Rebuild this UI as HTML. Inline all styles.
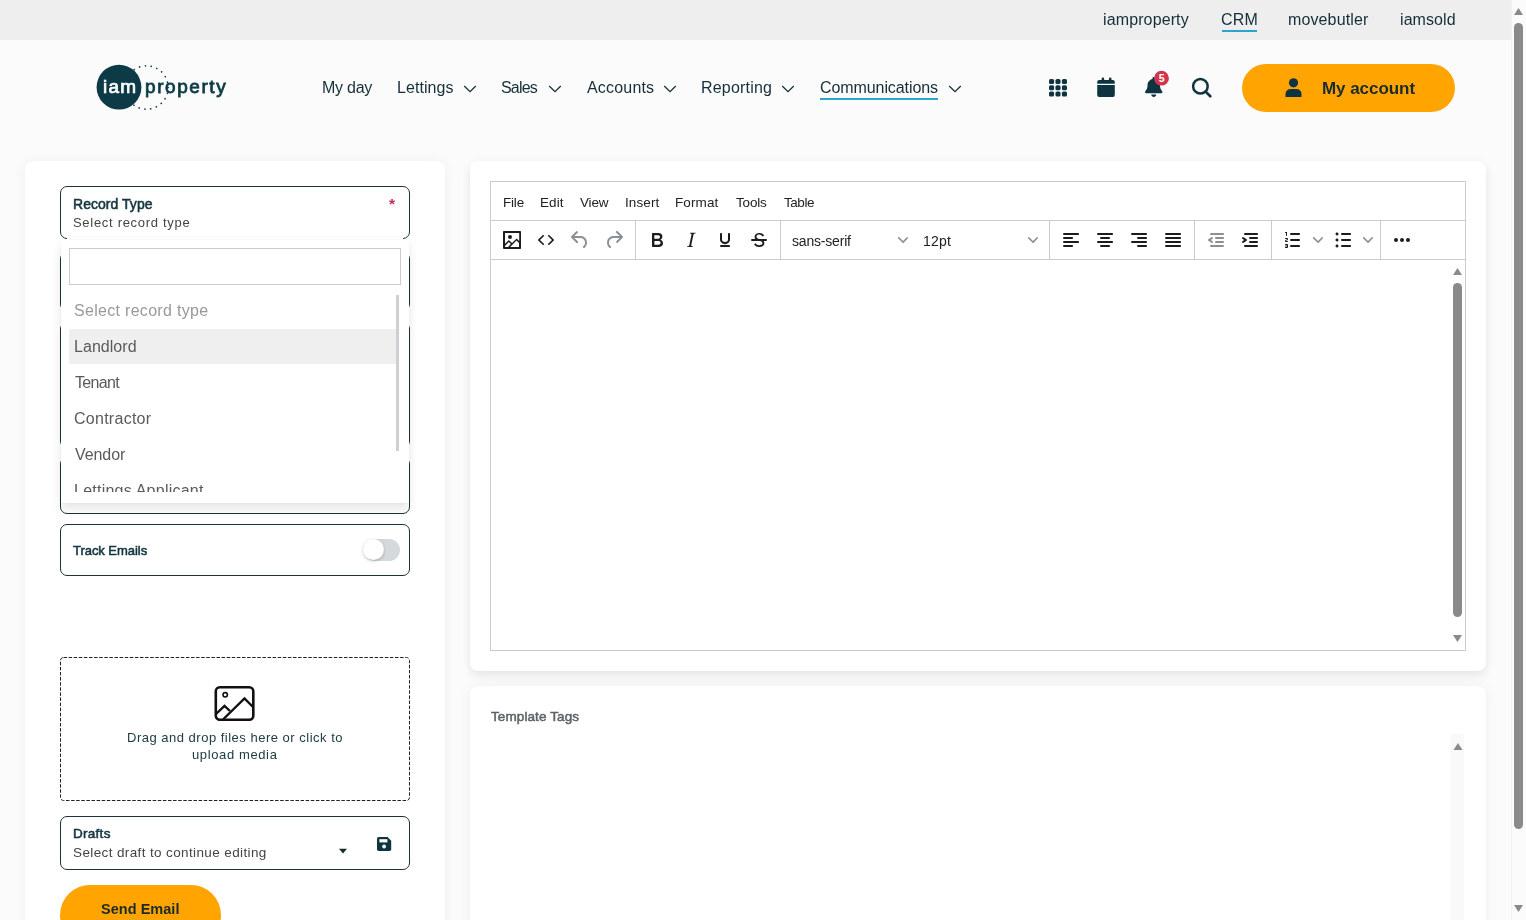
<!DOCTYPE html>
<html><head><meta charset="utf-8">
<style>
html,body{margin:0;padding:0;}
body{width:1526px;height:920px;overflow:hidden;position:relative;background:#fbfbfb;font-family:"Liberation Sans",sans-serif;}
.t{position:absolute;white-space:nowrap;line-height:1;will-change:transform;}
</style></head><body>
<div style="position:absolute;left:0px;top:0px;width:1511px;height:40px;background:#eeeeee"></div>
<div class="t" style="left:1103.40px;top:12px;font-size:16px;color:#142f38;font-weight:400;letter-spacing:0.120px;">iamproperty</div>
<div class="t" style="left:1221.10px;top:12px;font-size:16px;color:#142f38;font-weight:400;letter-spacing:0.150px;">CRM</div>
<div style="position:absolute;left:1222px;top:30px;width:35px;height:2px;background:#2aa5cf"></div>
<div class="t" style="left:1288.30px;top:12px;font-size:16px;color:#142f38;font-weight:400;letter-spacing:0.122px;">movebutler</div>
<div class="t" style="left:1399.80px;top:12px;font-size:16px;color:#142f38;font-weight:400;letter-spacing:0.083px;">iamsold</div>
<svg style="position:absolute;left:90px;top:55px" width="150" height="65" viewBox="90 55 150 65">
<circle cx="119" cy="87.2" r="22.4" fill="#0d3a47"/>
<circle cx="146.5" cy="87.5" r="21.7" fill="none" stroke="#0d3a47" stroke-width="1.7" stroke-dasharray="0.01 5.9" stroke-linecap="round"/>
</svg>
<div class="t" style="left:102.80px;top:77px;font-size:19px;color:#ffffff;font-weight:400;letter-spacing:1.200px;-webkit-text-stroke:0.7px #ffffff;">iam</div>
<div class="t" style="left:145.00px;top:77px;font-size:19px;color:#0d3a47;font-weight:400;letter-spacing:1.571px;-webkit-text-stroke:0.8px #0d3a47;">property</div>
<div class="t" style="left:322.20px;top:80px;font-size:16px;color:#142f38;font-weight:400;letter-spacing:-0.260px;">My day</div>
<div class="t" style="left:396.60px;top:80px;font-size:16px;color:#142f38;font-weight:400;letter-spacing:0.057px;">Lettings</div>
<svg style="position:absolute;left:462.5px;top:84px" width="15" height="10" viewBox="0 0 15 10"><path d="M1.2 2 L7 7.7 L12.8 2" fill="none" stroke="#142f38" stroke-width="1.25"/></svg>
<div class="t" style="left:500.50px;top:80px;font-size:16px;color:#142f38;font-weight:400;letter-spacing:-0.800px;">Sales</div>
<svg style="position:absolute;left:547.5px;top:84px" width="15" height="10" viewBox="0 0 15 10"><path d="M1.2 2 L7 7.7 L12.8 2" fill="none" stroke="#142f38" stroke-width="1.25"/></svg>
<div class="t" style="left:586.50px;top:80px;font-size:16px;color:#142f38;font-weight:400;letter-spacing:0.186px;">Accounts</div>
<svg style="position:absolute;left:663px;top:84px" width="15" height="10" viewBox="0 0 15 10"><path d="M1.2 2 L7 7.7 L12.8 2" fill="none" stroke="#142f38" stroke-width="1.25"/></svg>
<div class="t" style="left:701.30px;top:80px;font-size:16px;color:#142f38;font-weight:400;letter-spacing:0.188px;">Reporting</div>
<svg style="position:absolute;left:781.3px;top:84px" width="15" height="10" viewBox="0 0 15 10"><path d="M1.2 2 L7 7.7 L12.8 2" fill="none" stroke="#142f38" stroke-width="1.25"/></svg>
<div class="t" style="left:819.50px;top:80px;font-size:16px;color:#142f38;font-weight:400;letter-spacing:-0.085px;">Communications</div>
<svg style="position:absolute;left:947.8px;top:84px" width="15" height="10" viewBox="0 0 15 10"><path d="M1.2 2 L7 7.7 L12.8 2" fill="none" stroke="#142f38" stroke-width="1.25"/></svg>
<div style="position:absolute;left:820px;top:98px;width:118px;height:2px;background:#2aa5cf"></div>
<svg style="position:absolute;left:1049.1px;top:78.8px" width="19" height="19" viewBox="0 0 19 19" fill="#0e3441"><rect x="0.00" y="0.00" width="5.1" height="5.1" rx="1.6"/><rect x="6.45" y="0.00" width="5.1" height="5.1" rx="1.6"/><rect x="12.90" y="0.00" width="5.1" height="5.1" rx="1.6"/><rect x="0.00" y="6.20" width="5.1" height="5.1" rx="1.6"/><rect x="6.45" y="6.20" width="5.1" height="5.1" rx="1.6"/><rect x="12.90" y="6.20" width="5.1" height="5.1" rx="1.6"/><rect x="0.00" y="12.40" width="5.1" height="5.1" rx="1.6"/><rect x="6.45" y="12.40" width="5.1" height="5.1" rx="1.6"/><rect x="12.90" y="12.40" width="5.1" height="5.1" rx="1.6"/></svg>
<svg style="position:absolute;left:1097px;top:77px" width="19" height="21" viewBox="0 0 19 21" fill="#0e3441">
<rect x="4.6" y="0.6" width="2.6" height="3.6" rx="1.3"/><rect x="11.9" y="0.6" width="2.6" height="3.6" rx="1.3"/>
<path d="M0.2 4.9 Q0.2 2.9 2.2 2.9 H15.8 Q17.8 2.9 17.8 4.9 V6.8 H0.2 Z"/>
<path d="M0.2 8.1 H17.8 V18 Q17.8 20 15.8 20 H2.2 Q0.2 20 0.2 18 Z"/>
</svg>
<svg style="position:absolute;left:1145.3px;top:77.2px" width="17.5" height="20" viewBox="0 0 448 512">
<path fill="#0e3441" d="M224 0c-17.7 0-32 14.3-32 32V51.2C119 66 64 130.6 64 208v18.8c0 47-17.3 92.4-48.5 127.6l-7.4 8.300c-8.4 9.4-10.4 22.9-5.3 34.4S19.4 416 32 416H416c12.6 0 24-7.4 29.2-18.9s3.1-25-5.3-34.4l-7.4-8.3C401.3 319.2 384 273.9 384 226.8V208c0-77.4-55-142-128-156.8V32c0-17.7-14.3-32-32-32zm45.3 493.3c12-12 18.7-28.3 18.7-45.3H224 160c0 17 6.7 33.3 18.7 45.3s28.3 18.7 45.3 18.7s33.3-6.7 45.3-18.7z"/>
</svg>
<svg style="position:absolute;left:1150px;top:66px" width="24" height="24" viewBox="0 0 24 24">
<circle cx="11.5" cy="12.2" r="7.4" fill="#d1344b"/>
<text x="11.6" y="16.1" font-family="Liberation Sans" font-weight="700" font-size="10.5" fill="#fff" text-anchor="middle">5</text>
</svg>
<svg style="position:absolute;left:1191px;top:77px" width="23" height="22" viewBox="0 0 23 22">
<circle cx="9.4" cy="9.2" r="7.3" fill="none" stroke="#0e3441" stroke-width="2.5"/>
<path d="M14.6 14.6 L19.3 19.3" stroke="#0e3441" stroke-width="2.7" stroke-linecap="round"/>
</svg>
<div style="position:absolute;left:1242px;top:64px;width:213px;height:48px;background:#ffa400;border-radius:24px"></div>
<svg style="position:absolute;left:1285px;top:78px" width="18" height="20" viewBox="0 0 18 20" fill="#0d3440">
<circle cx="8.5" cy="4.8" r="4.6"/>
<path d="M0.5 19 V16.5 Q0.5 11 6 11 H11 Q16.5 11 16.5 16.5 V19 Z"/>
</svg>
<div class="t" style="left:1322.00px;top:80px;font-size:17px;color:#1a2b2f;font-weight:700;letter-spacing:-0.044px;">My account</div>
<div style="position:absolute;left:25px;top:161px;width:420px;height:800px;background:#fff;border-radius:8px;box-shadow:0 0 14px rgba(0,0,0,0.05)"></div>
<div style="position:absolute;left:60px;top:252px;width:350px;height:59px;box-sizing:border-box;border:1px solid #1e3238;border-radius:7px"></div>
<div style="position:absolute;left:60px;top:322px;width:350px;height:126px;box-sizing:border-box;border:1px solid #1e3238;border-radius:7px"></div>
<div style="position:absolute;left:60px;top:457px;width:350px;height:57px;box-sizing:border-box;border:1px solid #1e3238;border-radius:7px"></div>
<div style="position:absolute;left:60px;top:186px;width:350px;height:53px;box-sizing:border-box;border:1px solid #1e3238;border-radius:7px;background:#fff"></div>
<div class="t" style="left:72.60px;top:197px;font-size:14px;color:#143540;font-weight:400;letter-spacing:0.040px;-webkit-text-stroke:0.55px #143540;">Record Type</div>
<div class="t" style="left:72.60px;top:216px;font-size:13px;color:#444;font-weight:400;letter-spacing:0.700px;">Select record type</div>
<div class="t" style="left:389.00px;top:196px;font-size:15.5px;color:#c0304a;font-weight:700;">*</div>
<div style="position:absolute;left:67px;top:237px;width:336px;height:3px;background:#fff;box-shadow:0 -1px 1px rgba(0,0,0,0.02)"></div>
<div style="position:absolute;left:61px;top:240px;width:348px;height:263px;background:#fff;box-shadow:0 6px 10px rgba(0,0,0,0.10), 0 0 3px rgba(0,0,0,0.04)"></div>
<div style="position:absolute;left:69px;top:248px;width:332px;height:37px;box-sizing:border-box;border:1px solid #cccccc;background:#fff"></div>
<div style="position:absolute;left:69px;top:329px;width:330px;height:35px;background:#efefef;border-radius:2px"></div>
<div class="t" style="left:74.00px;top:303px;font-size:16px;color:#999;font-weight:400;letter-spacing:0.300px;">Select record type</div>
<div class="t" style="left:74.00px;top:339px;font-size:16px;color:#5a5a5a;font-weight:400;letter-spacing:0.043px;">Landlord</div>
<div class="t" style="left:75.00px;top:375px;font-size:16px;color:#5a5a5a;font-weight:400;letter-spacing:-0.680px;">Tenant</div>
<div class="t" style="left:74.00px;top:411px;font-size:16px;color:#5a5a5a;font-weight:400;letter-spacing:0.267px;">Contractor</div>
<div class="t" style="left:75.00px;top:447px;font-size:16px;color:#5a5a5a;font-weight:400;letter-spacing:-0.080px;">Vendor</div>
<div class="t" style="left:74.00px;top:483px;font-size:16px;color:#5a5a5a;font-weight:400;letter-spacing:0.235px;">Lettings Applicant</div>
<div style="position:absolute;left:61px;top:492px;width:335px;height:11px;background:#fff"></div>
<div style="position:absolute;left:396px;top:295px;width:3px;height:156px;background:#cfcfd3"></div>
<div style="position:absolute;left:60px;top:524px;width:350px;height:52px;box-sizing:border-box;border:1px solid #1e3238;border-radius:7px;background:#fff"></div>
<div class="t" style="left:73.40px;top:544px;font-size:13px;color:#143540;font-weight:400;letter-spacing:-0.045px;-webkit-text-stroke:0.55px #143540;">Track Emails</div>
<div style="position:absolute;left:364px;top:539px;width:36px;height:22px;background:#d5d9dc;border-radius:11px"></div>
<div style="position:absolute;left:363px;top:539px;width:21px;height:21px;box-sizing:border-box;background:#fff;border-radius:50%;box-shadow:0 1px 3px rgba(0,0,0,0.25)"></div>
<svg style="position:absolute;left:60px;top:657px" width="350" height="144" viewBox="0 0 350 144">
<rect x="0.5" y="0.5" width="349" height="143" rx="3" fill="none" stroke="#222" stroke-width="1" stroke-dasharray="3.5 1.6"/>
</svg>
<svg style="position:absolute;left:214px;top:686px" width="42" height="36" viewBox="0 0 42 36">
<rect x="1.8" y="1.3" width="37.5" height="32.5" rx="4" fill="none" stroke="#111" stroke-width="2.6"/>
<circle cx="11.2" cy="8.8" r="2.2" fill="none" stroke="#111" stroke-width="1.6"/>
<path d="M2 28 L10.5 19.8 L16 25" fill="none" stroke="#111" stroke-width="2.4"/>
<path d="M9 33.5 L30.5 12.5 L39 21" fill="none" stroke="#111" stroke-width="2.4"/>
</svg>
<div class="t" style="left:126.80px;top:731px;font-size:13px;color:#203c44;font-weight:400;letter-spacing:0.500px;">Drag and drop files here or click to</div>
<div class="t" style="left:192.40px;top:748px;font-size:13px;color:#203c44;font-weight:400;letter-spacing:0.618px;">upload media</div>
<div style="position:absolute;left:60px;top:816px;width:350px;height:54px;box-sizing:border-box;border:1px solid #1e3238;border-radius:7px;background:#fff"></div>
<div class="t" style="left:72.60px;top:827px;font-size:13.5px;color:#143540;font-weight:400;letter-spacing:0.280px;-webkit-text-stroke:0.55px #143540;">Drafts</div>
<div class="t" style="left:72.60px;top:846px;font-size:13.5px;color:#444;font-weight:400;letter-spacing:0.377px;">Select draft to continue editing</div>
<svg style="position:absolute;left:338px;top:848px" width="10" height="7" viewBox="0 0 10 7"><path d="M1 0.8 H9 L5 5.6 Z" fill="#1a2b30"/></svg>
<svg style="position:absolute;left:377px;top:837px" width="15" height="15" viewBox="0 0 15 15">
<path fill="#0f3441" d="M0 1.8 Q0 0 1.8 0 H10.5 L14.2 3.7 V12.2 Q14.2 14 12.4 14 H1.8 Q0 14 0 12.2 Z"/>
<rect x="2.4" y="2.2" width="8" height="3.2" fill="#fff"/>
<circle cx="7.1" cy="9.5" r="1.9" fill="#fff"/>
</svg>
<div style="position:absolute;left:60px;top:885px;width:161px;height:60px;background:#ffa400;border-radius:30px"></div>
<div class="t" style="left:101.30px;top:902px;font-size:14.5px;color:#1a2b2f;font-weight:700;letter-spacing:0.033px;">Send Email</div>
<div style="position:absolute;left:470px;top:161px;width:1016px;height:510px;background:#fff;border-radius:8px;box-shadow:0 5px 10px rgba(0,0,0,0.07), 0 0 12px rgba(0,0,0,0.03)"></div>
<div style="position:absolute;left:490px;top:181px;width:976px;height:470px;box-sizing:border-box;border:1px solid #cccccc"></div>
<div style="position:absolute;left:491px;top:220px;width:974px;height:1px;background:#cccccc"></div>
<div style="position:absolute;left:491px;top:259px;width:974px;height:1px;background:#cccccc"></div>
<div style="position:absolute;left:635px;top:221px;width:1px;height:38px;background:#cccccc"></div>
<div style="position:absolute;left:780px;top:221px;width:1px;height:38px;background:#cccccc"></div>
<div style="position:absolute;left:1049px;top:221px;width:1px;height:38px;background:#cccccc"></div>
<div style="position:absolute;left:1194px;top:221px;width:1px;height:38px;background:#cccccc"></div>
<div style="position:absolute;left:1271px;top:221px;width:1px;height:38px;background:#cccccc"></div>
<div style="position:absolute;left:1380px;top:221px;width:1px;height:38px;background:#cccccc"></div>
<div class="t" style="left:502.70px;top:196px;font-size:13.5px;color:#222222;font-weight:400;letter-spacing:-0.200px;">File</div>
<div class="t" style="left:539.80px;top:196px;font-size:13.5px;color:#222222;font-weight:400;letter-spacing:0.100px;">Edit</div>
<div class="t" style="left:580.00px;top:196px;font-size:13.5px;color:#222222;font-weight:400;letter-spacing:-0.167px;">View</div>
<div class="t" style="left:624.80px;top:196px;font-size:13.5px;color:#222222;font-weight:400;letter-spacing:0.120px;">Insert</div>
<div class="t" style="left:675.20px;top:196px;font-size:13.5px;color:#222222;font-weight:400;letter-spacing:0.120px;">Format</div>
<div class="t" style="left:736.10px;top:196px;font-size:13.5px;color:#222222;font-weight:400;letter-spacing:-0.175px;">Tools</div>
<div class="t" style="left:784.40px;top:196px;font-size:13.5px;color:#222222;font-weight:400;letter-spacing:-0.450px;">Table</div>
<svg style="position:absolute;left:500px;top:228px" width="24" height="24" viewBox="0 0 24 24" fill="#1c1c1c"><path d="M5 15.7l3.3-3.2c.3-.3.7-.3 1 0L12 15l4.1-4c.3-.4.8-.4 1.1 0l2 1.9V5H5v10.7zM5 18V19h3l2.8-2.9-2-2L5 17.9zm14-3l-2.5-2.4-6.4 6.5H19v-4zM4 3h16c.6 0 1 .4 1 1v16c0 .6-.4 1-1 1H4a1 1 0 01-1-1V4c0-.6.4-1 1-1zm6 8a2 2 0 100-4 2 2 0 000 4z" fill-rule="nonzero"/></svg>
<svg style="position:absolute;left:534px;top:228px" width="24" height="24" viewBox="0 0 24 24" fill="#1c1c1c"><path d="M9.8 15.7c.3.3.3.8 0 1-.3.4-.9.4-1.2 0l-4.4-4.1a.8.8 0 010-1.2l4.4-4.2c.3-.3.9-.3 1.2 0 .3.3.3.8 0 1.1L6 12l3.8 3.7zM14.2 15.7c-.3.3-.3.8 0 1 .4.4.9.4 1.2 0l4.4-4.1c.3-.3.3-.9 0-1.2l-4.4-4.2a.8.8 0 00-1.2 0c-.3.3-.3.8 0 1.1L18 12l-3.8 3.7z"/></svg>
<svg style="position:absolute;left:568px;top:228px" width="24" height="24" viewBox="0 0 24 24" fill="#8b9096"><path d="M6.4 8H12c3.7 0 6.2 2 6.8 5.1.6 2.7-.4 5.6-2.3 6.8a1 1 0 01-1-1.8c1.1-.6 1.8-2.7 1.4-4.6-.5-2.1-2.1-3.5-4.9-3.5H6.4l3.3 3.3a1 1 0 11-1.4 1.4l-5-5a1 1 0 010-1.4l5-5a1 1 0 011.4 1.4L6.4 8z"/></svg>
<svg style="position:absolute;left:602px;top:228px" width="24" height="24" viewBox="0 0 24 24" fill="#8b9096"><path d="M17.6 10H12c-2.8 0-4.4 1.4-4.9 3.5-.4 2 .3 4 1.4 4.6a1 1 0 11-1 1.8c-2-1.2-2.9-4.1-2.3-6.8.6-3 3-5.1 6.8-5.1h5.6l-3.3-3.3a1 1 0 111.4-1.4l5 5a1 1 0 010 1.4l-5 5a1 1 0 01-1.4-1.4l3.3-3.3z"/></svg>
<svg style="position:absolute;left:645px;top:228px" width="24" height="24" viewBox="0 0 24 24" fill="#1c1c1c"><path d="M7.8 19c-.3 0-.5 0-.6-.2l-.2-.5V5.7c0-.2 0-.4.2-.5l.6-.2h5c1.5 0 2.7.3 3.5 1 .7.6 1.1 1.4 1.1 2.5a3 3 0 01-.6 1.9c-.4.6-1 1-1.6 1.2.4.1.9.3 1.3.6s.8.7 1 1.2c.4.4.5 1 .5 1.6 0 1.3-.4 2.3-1.3 3-.8.7-2.1 1-3.800 1H7.8zm5-8.3c.6 0 1.2-.1 1.6-.5.4-.3.6-.7.6-1.3 0-1.1-.8-1.7-2.3-1.7H9.3v3.5h3.4zm.5 6c.7 0 1.3-.1 1.7-.4.4-.4.6-.9.6-1.5s-.2-1-.7-1.4c-.4-.3-1-.4-2-.4H9.4v3.8h4z" fill-rule="evenodd"/></svg>
<svg style="position:absolute;left:679px;top:228px" width="24" height="24" viewBox="0 0 24 24" fill="#1c1c1c"><path d="M16.7 4.7l-.1.9h-.3c-.6 0-1 0-1.4.3-.3.3-.4.6-.5 1.1l-2.1 9.8v.6c0 .5.4.8 1.4.8h.2l-.2.8H8l.2-.8h.2c1.1 0 1.8-.5 2-1.5l2-9.8.1-.5c0-.6-.4-.8-1.4-.8h-.3l.2-.9h5.8z" fill-rule="evenodd"/></svg>
<svg style="position:absolute;left:713px;top:228px" width="24" height="24" viewBox="0 0 24 24" fill="#1c1c1c"><path d="M16 5c.6 0 1 .4 1 1v5.5a4 4 0 01-.4 1.8l-1 1.4a5.3 5.3 0 01-5.5 1 5 5 0 01-1.6-1c-.5-.4-.8-.9-1.1-1.4a4 4 0 01-.4-1.8V6c0-.6.4-1 1-1s1 .4 1 1v5.5c0 .3 0 .6.2 1l.6.7a3.300 3.300 0 002.2.8 3.4 3.4 0 002.2-.8c.3-.2.4-.5.6-.8l.2-.9V6c0-.6.4-1 1-1zM8 17h8c.6 0 1 .4 1 1s-.4 1-1 1H8a1 1 0 010-2z" fill-rule="evenodd"/></svg>
<svg style="position:absolute;left:747px;top:228px" width="24" height="24" viewBox="0 0 24 24" fill="#1c1c1c"><path d="M15.6 8.5c-.5-.7-1-1.1-1.3-1.3-.6-.4-1.3-.6-2-.6-2.7 0-2.8 1.7-2.8 2.1 0 1.6 1.8 2 3.2 2.3 4.4.9 4.6 2.8 4.600 3.9 0 1.4-.7 4.1-5 4.1A6.2 6.2 0 017 16.4l1.5-1.1c.4.6 1.6 2 3.7 2 1.6 0 2.5-.4 3-1.2.4-.8.3-2-.8-2.6-.7-.4-1.6-.7-2.9-1-1-.2-3.9-.8-3.9-3.6C7.6 6 10.3 5 12.4 5c2.9 0 4.2 1.6 4.7 2.4l-1.500 1.1z"/><path d="M5 11h14a1 1 0 010 2H5a1 1 0 010-2z" fill-rule="nonzero"/></svg>
<div class="t" style="left:792.30px;top:234px;font-size:14px;color:#222222;font-weight:400;letter-spacing:-0.189px;">sans-serif</div>
<svg style="position:absolute;left:897.5px;top:234.5px" width="10" height="10" viewBox="0 0 10 10" fill="#222222" fill-opacity="0.5"><path d="M8.7 2.2c.3-.3.8-.3 1 0 .4.4.4.9 0 1.2L5.7 7.8c-.3.3-.9.3-1.2 0L.2 3.4a.8.8 0 010-1.2c.3-.3.8-.3 1.1 0L5 6l3.7-3.8z" fill-rule="nonzero"/></svg>
<div class="t" style="left:923.00px;top:234px;font-size:14px;color:#222222;font-weight:400;letter-spacing:0.200px;">12pt</div>
<svg style="position:absolute;left:1028px;top:234.5px" width="10" height="10" viewBox="0 0 10 10" fill="#222222" fill-opacity="0.5"><path d="M8.7 2.2c.3-.3.8-.3 1 0 .4.4.4.9 0 1.2L5.7 7.8c-.3.3-.9.3-1.2 0L.2 3.4a.8.8 0 010-1.2c.3-.3.8-.3 1.1 0L5 6l3.7-3.8z" fill-rule="nonzero"/></svg>
<svg style="position:absolute;left:1059px;top:228px" width="24" height="24" viewBox="0 0 24 24" fill="#1c1c1c"><path d="M5 5h14c.6 0 1 .4 1 1s-.4 1-1 1H5a1 1 0 110-2zm0 4h8c.6 0 1 .4 1 1s-.4 1-1 1H5a1 1 0 110-2zm0 8h8c.6 0 1 .4 1 1s-.4 1-1 1H5a1 1 0 010-2zm0-4h14c.6 0 1 .4 1 1s-.4 1-1 1H5a1 1 0 010-2z" fill-rule="evenodd"/></svg>
<svg style="position:absolute;left:1093px;top:228px" width="24" height="24" viewBox="0 0 24 24" fill="#1c1c1c"><path d="M5 5h14c.6 0 1 .4 1 1s-.4 1-1 1H5a1 1 0 110-2zm3 4h8c.6 0 1 .4 1 1s-.4 1-1 1H8a1 1 0 110-2zm0 8h8c.6 0 1 .4 1 1s-.4 1-1 1H8a1 1 0 010-2zm-3-4h14c.6 0 1 .4 1 1s-.4 1-1 1H5a1 1 0 010-2z" fill-rule="evenodd"/></svg>
<svg style="position:absolute;left:1127px;top:228px" width="24" height="24" viewBox="0 0 24 24" fill="#1c1c1c"><path d="M5 5h14c.6 0 1 .4 1 1s-.4 1-1 1H5a1 1 0 110-2zm6 4h8c.6 0 1 .4 1 1s-.4 1-1 1h-8a1 1 0 010-2zm0 8h8c.6 0 1 .4 1 1s-.4 1-1 1h-8a1 1 0 010-2zm-6-4h14c.6 0 1 .4 1 1s-.4 1-1 1H5a1 1 0 010-2z" fill-rule="evenodd"/></svg>
<svg style="position:absolute;left:1161px;top:228px" width="24" height="24" viewBox="0 0 24 24" fill="#1c1c1c"><path d="M5 5h14c.6 0 1 .4 1 1s-.4 1-1 1H5a1 1 0 110-2zm0 4h14c.6 0 1 .4 1 1s-.4 1-1 1H5a1 1 0 110-2zm0 4h14c.6 0 1 .4 1 1s-.4 1-1 1H5a1 1 0 010-2zm0 4h14c.6 0 1 .4 1 1s-.4 1-1 1H5a1 1 0 010-2z" fill-rule="evenodd"/></svg>
<svg style="position:absolute;left:1204px;top:228px" width="24" height="24" viewBox="0 0 24 24" fill="#8b9096"><path d="M7 5h12c.6 0 1 .4 1 1s-.4 1-1 1H7a1 1 0 110-2zm5 4h7c.6 0 1 .4 1 1s-.4 1-1 1h-7a1 1 0 010-2zm0 4h7c.6 0 1 .4 1 1s-.4 1-1 1h-7a1 1 0 010-2zm-5 4h12a1 1 0 010 2H7a1 1 0 010-2zm1.6-3.8a1 1 0 01-1.2 1.6l-3-2a1 1 0 010-1.6l3-2a1 1 0 011.2 1.6L6.8 12l1.8 1.2z" fill-rule="evenodd"/></svg>
<svg style="position:absolute;left:1238px;top:228px" width="24" height="24" viewBox="0 0 24 24" fill="#1c1c1c"><path d="M7 5h12c.6 0 1 .4 1 1s-.4 1-1 1H7a1 1 0 110-2zm5 4h7c.6 0 1 .4 1 1s-.4 1-1 1h-7a1 1 0 010-2zm0 4h7c.6 0 1 .4 1 1s-.4 1-1 1h-7a1 1 0 010-2zm-5 4h12a1 1 0 010 2H7a1 1 0 010-2zm-2.6-3.8L6.2 12l-1.8-1.2a1 1 0 011.2-1.6l3 2a1 1 0 010 1.6l-3 2a1 1 0 11-1.2-1.6z" fill-rule="evenodd"/></svg>
<svg style="position:absolute;left:1281px;top:228px" width="24" height="24" viewBox="0 0 24 24" fill="#1c1c1c"><path d="M10 17h8c.6 0 1 .4 1 1s-.4 1-1 1h-8a1 1 0 010-2zm0-6h8c.6 0 1 .4 1 1s-.4 1-1 1h-8a1 1 0 010-2zm0-6h8c.6 0 1 .4 1 1s-.4 1-1 1h-8a1 1 0 110-2zM6 4v3.5c0 .3-.2.5-.5.5a.5.5 0 01-.5-.5V5h-.5a.5.5 0 010-1H6zm-1 8.8l.2.2h1.3c.3 0 .5.2.5.5s-.2.5-.5.5H4.9a1 1 0 01-.9-1V13c0-.4.3-.8.6-1l1.2-.4.2-.3a.2.2 0 00-.2-.2H4.5a.5.5 0 01-.5-.5c0-.3.2-.5.5-.5h1.6c.5 0 .9.4.9 1v.1c0 .4-.3.8-.6 1l-1.2.4-.2.3zM7 17v2c0 .6-.4 1-1 1H4.5a.5.5 0 010-1h1.2c.2 0 .3-.1.3-.3 0-.2-.1-.3-.3-.3H4.4a.4.4 0 110-.8h1.3c.2 0 .3-.1.3-.3 0-.2-.1-.3-.3-.3H4.5a.5.5 0 110-1H6c.6 0 1 .4 1 1z" fill-rule="evenodd"/></svg>
<svg style="position:absolute;left:1313px;top:234.5px" width="10" height="10" viewBox="0 0 10 10" fill="#222222" fill-opacity="0.5"><path d="M8.7 2.2c.3-.3.8-.3 1 0 .4.4.4.9 0 1.2L5.7 7.8c-.3.3-.9.3-1.2 0L.2 3.4a.8.8 0 010-1.2c.3-.3.8-.3 1.1 0L5 6l3.7-3.8z" fill-rule="nonzero"/></svg>
<svg style="position:absolute;left:1331px;top:228px" width="24" height="24" viewBox="0 0 24 24" fill="#1c1c1c"><path d="M11 5h8c.6 0 1 .4 1 1s-.4 1-1 1h-8a1 1 0 010-2zm0 6h8c.6 0 1 .4 1 1s-.4 1-1 1h-8a1 1 0 010-2zm0 6h8c.6 0 1 .4 1 1s-.4 1-1 1h-8a1 1 0 010-2zM4.5 6c0-.4.1-.8.4-1 .3-.4.7-.5 1.1-.5.4 0 .8.1 1 .4.4.3.5.7.5 1.1 0 .4-.1.8-.4 1-.3.4-.7.5-1.1.5-.4 0-.8-.1-1-.4-.4-.3-.5-.7-.5-1.1zm0 6c0-.4.1-.8.4-1 .3-.4.7-.5 1.1-.5.4 0 .8.1 1 .4.4.3.5.7.5 1.1 0 .4-.1.8-.4 1-.3.4-.7.5-1.1.5-.4 0-.8-.1-1-.4-.4-.3-.5-.7-.5-1.1zm0 6c0-.4.1-.8.4-1 .3-.4.7-.5 1.1-.5.4 0 .8.1 1 .4.4.3.5.7.5 1.1 0 .4-.1.8-.4 1-.3.4-.7.5-1.1.5-.4 0-.8-.1-1-.4-.4-.3-.5-.7-.5-1.1z" fill-rule="evenodd"/></svg>
<svg style="position:absolute;left:1362.5px;top:234.5px" width="10" height="10" viewBox="0 0 10 10" fill="#222222" fill-opacity="0.5"><path d="M8.7 2.2c.3-.3.8-.3 1 0 .4.4.4.9 0 1.2L5.7 7.8c-.3.3-.9.3-1.2 0L.2 3.4a.8.8 0 010-1.2c.3-.3.8-.3 1.1 0L5 6l3.7-3.8z" fill-rule="nonzero"/></svg>
<svg style="position:absolute;left:1390px;top:228px" width="24" height="24" viewBox="0 0 24 24" fill="#1c1c1c"><path d="M6 10a2 2 0 00-2 2c0 1.1.9 2 2 2a2 2 0 002-2 2 2 0 00-2-2zm12 0a2 2 0 00-2 2c0 1.1.9 2 2 2a2 2 0 002-2 2 2 0 00-2-2zm-6 0a2 2 0 00-2 2c0 1.1.9 2 2 2a2 2 0 002-2 2 2 0 00-2-2z" fill-rule="nonzero"/></svg>
<div style="position:absolute;left:470px;top:686px;width:1016px;height:300px;background:#fff;border-radius:8px;box-shadow:0 0 14px rgba(0,0,0,0.05)"></div>
<div class="t" style="left:490.90px;top:710px;font-size:13.5px;color:#5c6266;font-weight:400;letter-spacing:0.100px;-webkit-text-stroke:0.5px #5c6266;">Template Tags</div>
<div style="position:absolute;left:1451px;top:734px;width:13px;height:186px;background:#f9f9f9"></div>
<div style="position:absolute;left:1511px;top:0px;width:15px;height:920px;background:#fbfbfb;border-left:1px solid #f0f0f0;box-sizing:border-box"></div>
<svg style="position:absolute;left:1511px;top:0" width="15" height="920" viewBox="0 0 15 920"><path d="M3 15 L7.5 8 L12 15 Z" fill="#8a8a8a"/><path d="M3 905 L7.5 912 L12 905 Z" fill="#8a8a8a"/><rect x="3" y="23" width="9" height="806" rx="4.5" fill="#8a8a8a"/></svg>
<svg style="position:absolute;left:1450px;top:260px" width="15" height="390" viewBox="0 0 15 390"><path d="M3 15 L7.5 8 L12 15 Z" fill="#8a8a8a"/><path d="M3 375 L7.5 382 L12 375 Z" fill="#8a8a8a"/><rect x="3" y="23" width="9" height="334" rx="4.5" fill="#8a8a8a"/></svg>
<svg style="position:absolute;left:1450px;top:735px" width="15" height="20" viewBox="0 0 15 20"><path d="M3.5 15 L8 8 L12.5 15 Z" fill="#8a8a8a"/></svg>
</body></html>
